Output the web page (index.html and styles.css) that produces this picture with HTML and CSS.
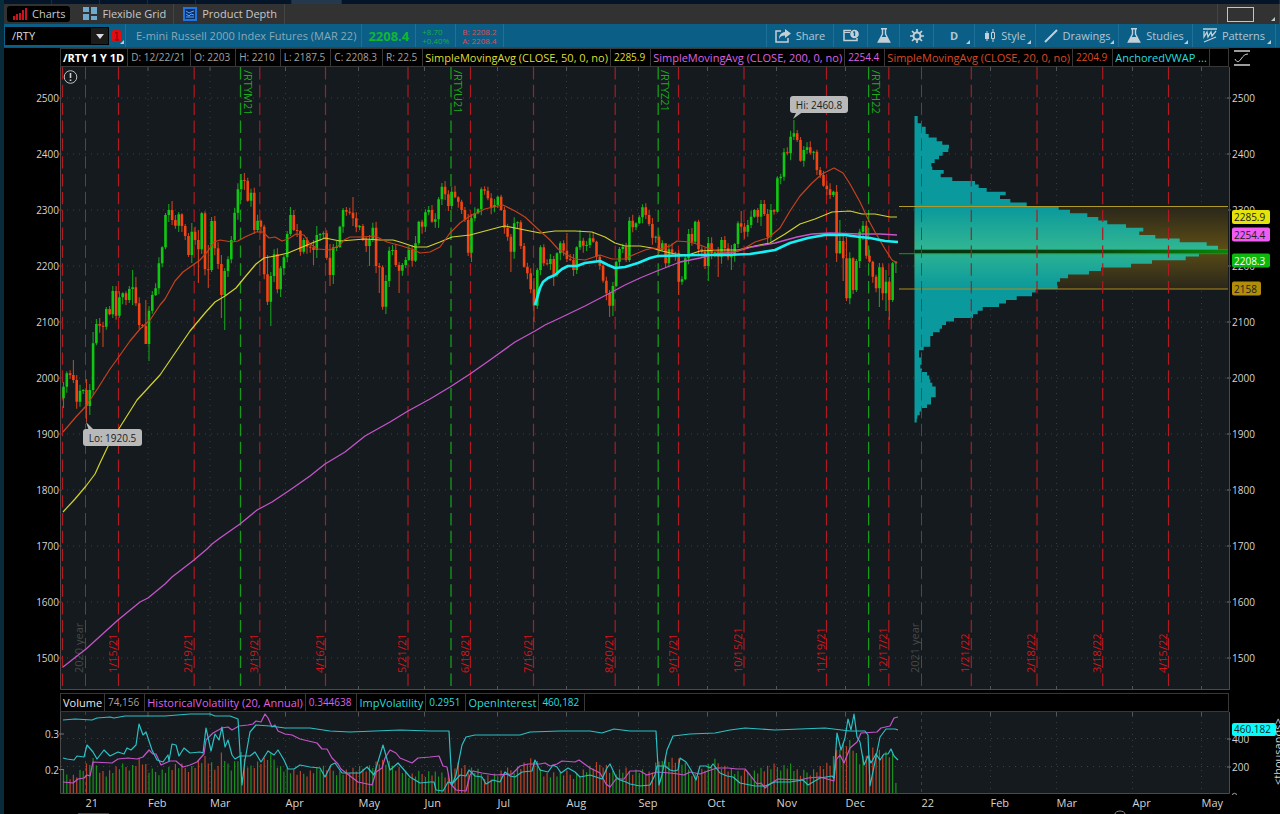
FILE: index.html
```html
<!DOCTYPE html>
<html lang="en">
<head>
<meta charset="utf-8">
<title>Charts - /RTY</title>
<link rel="stylesheet" href="styles.css">
</head>
<body>
<div class="app">
  <div class="window-strip"><i class="seg s1"></i><i class="seg s2"></i><i class="seg s3"></i><i class="seg s4"></i><i class="seg s5"></i><i class="seg active"></i><i class="seg"></i></div>

  <nav class="tabs">
    <button class="tab selected"><svg width="14" height="12" viewBox="0 0 14 12"><path d="M1 8v4M4 6v6M7 5v7M10 2v10M13 0v12" stroke="#c8141c" stroke-width="2"/></svg>Charts</button>
    <button class="tab"><svg width="14" height="14" viewBox="0 0 14 14" fill="#6fa9cc"><path d="M0 0h6v5H0zM8 0h6v7H8zM0 7h6v6H0zM8 9h6v4H8z"/></svg>Flexible Grid</button>
    <button class="tab"><svg width="14" height="14" viewBox="0 0 14 14"><rect x="1" y="1" width="12" height="12" fill="#0c2f66" stroke="#1f74dd" stroke-width="2"/><path d="M3 4l3 2 2-1 3-1M3 7l3 2 2-2 3 1M3 10h8" stroke="#58a6ff" fill="none"/></svg>Product Depth</button>
    <span class="grow"></span>
    <button class="tab layout" aria-label="Layout"><svg width="27" height="15" viewBox="0 0 27 15"><rect x=".5" y=".5" width="26" height="14" fill="none" stroke="#c4c4c4"/></svg></button>
  </nav>

  <div class="toolbar">
    <div class="symbol">
      <input type="text" value="/RTY" aria-label="Symbol">
      <button aria-label="Symbol list"><svg width="8" height="5" viewBox="0 0 8 5"><path d="M0 0h8L4 5z" fill="#ddd"/></svg></button>
    </div>
    <button class="link corner" aria-label="Link"><svg width="10" height="12" viewBox="0 0 10 12"><rect width="9" height="12" rx="2" fill="#e00d12"/><path d="M3 3l2-1v8M3 10h4" stroke="#800" fill="none"/></svg></button>
    <span class="cell title">E-mini Russell 2000 Index Futures (MAR 22)</span>
    <strong class="cell last">2208.4</strong>
    <span class="cell pair up"><span>+8.70</span><span>+0.40%</span></span>
    <span class="cell pair down"><span>B: 2208.2</span><span>A: 2208.4</span></span>
    <span class="grow"></span>
    <button class="tool share"><svg width="16" height="14" viewBox="0 0 16 14"><path d="M6 2H1v11h12V9" fill="none" stroke="#c3d0d8" stroke-width="1.5"/><path d="M10 0l6 4.500-6 4.500V6.500C7 6.500 5 7.500 4 10c0-4 2-6.500 6-7z" fill="#c3d0d8"/></svg>Share</button>
    <button class="tool w34" aria-label="Calendar"><svg width="16" height="13" viewBox="0 0 16 13"><path d="M8 1.500H1v10h13V9" fill="none" stroke="#c3d0d8" stroke-width="1.500"/><path d="M1 3.500h6" stroke="#c3d0d8"/><circle cx="11.500" cy="5" r="4.300" fill="#c3d0d8"/><path d="M11.500 2.500V7M10.300 3.500l1.200-1" stroke="#0b5e86" stroke-width="1.400" fill="none"/></svg></button>
    <button class="tool w32" aria-label="Lab"><svg width="14" height="15" viewBox="0 0 14 15"><path d="M4 .7h6M5.500 1v5L1.300 14h11.400L8.500 6V1" fill="none" stroke="#c3d0d8" stroke-width="1.400"/><path d="M4 9h6l2.500 5h-11z" fill="#c3d0d8"/></svg></button>
    <button class="tool w34" aria-label="Settings"><svg width="14" height="14" viewBox="0 0 14 14"><circle cx="7" cy="7" r="3.500" fill="none" stroke="#c3d0d8" stroke-width="2"/><path d="M7 0v3M7 11v3M0 7h3M11 7h3M2 2l2.200 2.200M9.800 9.800L12 12M12 2L9.800 4.200M4.200 9.800L2 12" stroke="#c3d0d8" stroke-width="1.700"/></svg></button>
    <button class="tool corner w41"><b>D</b></button>
    <button class="tool corner style"><svg width="12" height="13" viewBox="0 0 12 13"><path d="M3 2v10M9 0v3M9 10v3" stroke="#c3d0d8"/><path d="M1 4h4v6H1z" fill="#c3d0d8"/><path d="M7.500 3.500h3v6h-3z" fill="none" stroke="#c3d0d8"/></svg>Style</button>
    <button class="tool corner w83"><svg width="14" height="14" viewBox="0 0 14 14"><path d="M1 13L13 1" stroke="#c3d0d8" stroke-width="2"/></svg>Drawings</button>
    <button class="tool corner w74"><svg width="14" height="15" viewBox="0 0 14 15"><path d="M4 .7h6M5.500 1v5L1.300 14h11.400L8.500 6V1" fill="none" stroke="#c3d0d8" stroke-width="1.400"/><path d="M4 9h6l2.500 5h-11z" fill="#c3d0d8"/></svg>Studies</button>
    <button class="tool corner w83"><svg width="14" height="15" viewBox="0 0 14 15"><path d="M0 1h14" stroke="#c3d0d8" stroke-width="1.500"/><path d="M1 3v6l3-5 1 5 3-5 1 4 4-5M1 14l12-5" fill="none" stroke="#c3d0d8" stroke-width="1.300"/></svg>Patterns</button>
    <span class="end"></span>
  </div>

  <main class="charts">
    <div class="studies">
      <b>/RTY 1 Y 1D</b><span>D: 12/22/21</span><span>O: 2203</span><span>H: 2210</span><span>L: 2187.5</span><span>C: 2208.3</span><span>R: 22.5</span><span class="name yellow">SimpleMovingAvg (CLOSE, 50, 0, no)</span><span class="yellow">2285.9</span><span class="name pink">SimpleMovingAvg (CLOSE, 200, 0, no)</span><span class="pink">2254.4</span><span class="name orange">SimpleMovingAvg (CLOSE, 20, 0, no)</span><span class="orange">2204.9</span><span class="name cyan">AnchoredVWAP ...</span>
    </div>
    <button class="scale" aria-label="Axis settings"><svg width="16" height="16" viewBox="0 0 16 16"><path d="M0 1h16M0 15h16" stroke="#d0d0d0" stroke-width="1.500"/><path d="M1 9c2 4 4 3 6 0s4-5 7-5" fill="none" stroke="#d0d0d0"/></svg></button>

    <svg class="plot" id="price" viewBox="61 67 1168 623" role="img" aria-label="Price chart">
      <defs>
        <linearGradient id="barFill" gradientUnits="userSpaceOnUse" x1="0" y1="207" x2="0" y2="289">
          <stop offset="0" stop-color="#0a999c"/><stop offset=".5" stop-color="#30b592"/><stop offset="1" stop-color="#0a999c"/>
        </linearGradient>
        <linearGradient id="valueFill" x1="0" y1="0" x2="0" y2="1">
          <stop offset="0" stop-color="#2a271b"/><stop offset=".5" stop-color="#5c4c14"/><stop offset="1" stop-color="#2a271b"/>
        </linearGradient>
        <linearGradient id="pocFill" x1="0" y1="0" x2="1" y2="0">
          <stop offset="0" stop-color="#042f10"/><stop offset=".6" stop-color="#064a0c"/><stop offset="1" stop-color="#078507"/>
        </linearGradient>
      </defs>
    </svg>

    <div class="studies lower">
      <span class="name white">Volume</span><span>74,156</span><span class="name pink">HistoricalVolatility (20, Annual)</span><span class="pink">0.344638</span><span class="name cyan">ImpVolatility</span><span class="cyan">0.2951</span><span class="name cyan">OpenInterest</span><span class="cyan">460,182</span>
    </div>

    <svg class="plot" id="volume" viewBox="61 712 1168 102" role="img" aria-label="Volume and volatility"></svg>
  </main>
</div>
<script src="chart.js"></script>
</body>
</html>
```
FILE: styles.css
```css
* { box-sizing: border-box; }

body {
  margin: 0;
  background: #000;
  color: #c8c8c8;
  font: 11px/14px "Open Sans", "Noto Sans", sans-serif;
}

button, input {
  font: inherit;
  color: inherit;
  background: none;
  border: 0;
  margin: 0;
  padding: 0;
}

svg { flex: none; }

.app {
  border-left: 4px solid #082c3c;
  overflow: hidden;
}

.grow { flex: 1; }

.window-strip {
  display: flex;
  height: 4px;
  background: #04152a;
}
.seg { border-right: 1px solid #1b2c40; flex: 1; }
.s1, .s2, .s3, .s4 { flex: 0 0 48px; }
.s5 { flex: 0 0 96px; }
.seg.active { flex: 0 0 50px; background: #24384e; }

.tabs {
  display: flex;
  align-items: center;
  height: 20px;
  background: #323232;
}
.tab {
  display: flex;
  align-items: center;
  gap: 5px;
  height: 20px;
  padding: 0 7px 0 9px;
  border-right: 1px solid #444;
}
.tab.selected {
  height: 16px;
  margin: 0 4px 0 3px;
  padding: 0 5px 0 6px;
  border: 0;
  border-radius: 3px;
  background: #000;
}
.tab.layout {
  border-left: 1px solid #444;
  padding: 0 25px 0 9px;
  position: relative;
}

.toolbar {
  display: flex;
  align-items: stretch;
  height: 24px;
  background: #0b5e86;
  border-bottom: 1px solid #0a5276;
  color: #b2c6d2;
}
.symbol {
  display: flex;
  width: 104px;
  margin: 3px 3px 2px 1px;
  background: #000;
  color: #ddd;
}
.symbol input { flex: 1; min-width: 0; padding-left: 7px; }
.symbol button {
  display: flex;
  align-items: center;
  justify-content: center;
  width: 17px;
  margin: 1px;
  background: #1b1b1b;
}
.link { display: flex; align-items: center; width: 14px; border-right: 1px solid #1f7199; }
.cell {
  display: flex;
  align-items: center;
  white-space: nowrap;
  padding: 0 6px;
  border-right: 1px solid #1f7199;
}
.title { padding: 0 5px 0 10px; color: #8aa9b9; }
.last { color: #10b830; font-size: 13px; }
.pair {
  flex-direction: column;
  align-items: flex-start;
  justify-content: center;
  font-size: 8px;
  line-height: 9px;
}
.up { color: #13b047; }
.down { color: #dc5054; }
.tool {
  display: flex;
  align-items: center;
  justify-content: center;
  gap: 5px;
  border-left: 1px solid #1f7199;
}
.end { width: 5px; border-left: 1px solid #1f7199; }
.share { width: 67px; }
.w32 { width: 32px; }
.w34 { width: 34px; }
.w41 { width: 41px; }
.style { width: 61px; }
.w74 { width: 74px; }
.w83 { width: 83px; }
.corner, .layout { position: relative; }
.corner::after, .layout::after {
  content: "";
  position: absolute;
  right: 4px;
  bottom: 3px;
  border: 2px solid transparent;
  border-right-color: #b8cad4;
  border-bottom-color: #b8cad4;
}
.link::after { right: 1px; }

.charts {
  display: grid;
  grid-template-columns: minmax(0, 1fr) 51px;
  padding-left: 57px;
}
.studies {
  grid-column: 1;
  display: flex;
  height: 19px;
  margin-left: -1px;
  border: 1px solid #383838;
  white-space: nowrap;
  overflow: hidden;
  color: #a2a2a2;
  font-size: 10px;
  line-height: 17px;
}
.studies > * { padding: 0 5px 0 3px; border-right: 1px solid #383838; }
.studies b, .studies .name { padding: 0 2px; font-size: 11px; }
.studies b { padding-right: 3px; color: #fff; }
.lower { margin-top: 3px; }
.studies .yellow { color: #dede32; }
.studies .pink { color: #de62e2; }
.studies .orange { color: #da4a24; }
.studies .cyan { color: #26dede; }
.studies .white { color: #e8e8e8; }
.scale { display: flex; align-items: center; padding-left: 5px; }

.plot {
  grid-column: 1;
  display: block;
  width: 100%;
  height: auto;
  overflow: visible;
}
.plot text { font-family: "Open Sans", "Noto Sans", sans-serif; font-size: 11px; fill: #d4d4d4; }
.plot .axis { font-size: 10px; }
.plot .mid { text-anchor: middle; }
.plot .end-text { text-anchor: end; }
.plot .expiry { fill: #d4161c; }
.plot .year { fill: #484848; }
.plot .roll { fill: #1aac1a; }
.plot .dark { fill: #202020; }
.plot .light { fill: #fff; }
```
FILE: chart.js
```js
const NS = "http://www.w3.org/2000/svg";

function add(parent, tag, attrs, text) {
  const node = document.createElementNS(NS, tag);
  for (const key in attrs) node.setAttribute(key, attrs[key]);
  if (text !== undefined) node.textContent = text;
  parent.appendChild(node);
  return node;
}
const line = (p, x1, y1, x2, y2, stroke, extra) =>
  add(p, "path", { d: `M${x1} ${y1}L${x2} ${y2}`, stroke, fill: "none", ...extra });
const curve = (p, points, stroke, width) =>
  add(p, "polyline", { points, stroke, "stroke-width": width, fill: "none", "stroke-linejoin": "round" });

const price = document.getElementById("price");
const volume = document.getElementById("volume");

const months = [[148, "Feb"], [210, "Mar"], [285.5, "Apr"], [358.5, "May"], [424.5, "Jun"], [497.5, "Jul"], [566.5, "Aug"], [638.5, "Sep"], [707.5, "Oct"], [776.5, "Nov"], [845.5, "Dec"], [990.5, "Feb"], [1056.5, "Mar"], [1132.5, "Apr"], [1201.5, "May"]];
const years = [[85.5, "21", "2020 year"], [921.5, "22", "2021 year"]];
const expiries = [[62.5, ""], [118.5, "1/15/21"], [194.2, "2/19/21"], [259.8, "3/19/21"], [325.5, "4/16/21"], [408, "5/21/21"], [470.5, "6/18/21"], [533.5, "7/16/21"], [615.2, "8/20/21"], [678.5, "9/17/21"], [744, "10/15/21"], [826.5, "11/19/21"], [888.8, "12/17/21"], [971.3, "1/21/22"], [1037, "2/18/22"], [1102.7, "3/18/22"], [1168.5, "4/15/22"]];
const rolls = [[240.5, "/RTYM21"], [451, "/RTYU21"], [658.2, "/RTYZ21"], [868.6, "/RTYH22"]];

/* Closes, three units per pixel, measured down from each base. */
const closes = [
  [160, [680,640,645,660,725,692,690,738,690,550,492,497,500,447,463,393,467,412,400,420,387,382,430,495,497,552,452,405,385,310,262,165,150,180,197,163,198,228,285,215,240,268,160,328,330,183,265,312,405,333,298,240,158,88,60,62,122,98,210,182,200,343,425,348,283,388,325,292,222,165,210,213,275,240,260,262,270,225,222,220,293,345,262,261,200,150,155,158,175,202,198,240,258,240,203,318,322,440,363,272,270,315,332,315,300,270,302,250,185,200,157,150,185,178,118,80,103,138,95,112,125,150,180,278,175,160,148,88,92,115,142,135,110,150,203,230,275,190,187,258,320,340,388,437,330,262,310,312,297,345,280,250,272,297,300,330,262,242,257,255,235,245,290,317,362,400,437,378,305,267,260,300,182,202,190]],
  [90, [382,352,375,402,443,440,480,460,520,478,488,490,575,568,505,432,455,395,478,485,528,460,490,487,500,450,475,502,497,462,400,410,425,405,380,360,380,342,372,440,360,365,265,260,187,190,140,130,150,212,180,172,188,185,240,255,287,298,315,305,490,453,505,625,505,600,513,425,407,497,515,560,595,532,610,575,630,520,515]]
];
/* Wick extremes that stand out: index -> [high, low] in chart pixels. */
const wicks = {
  0: [382, 408], 3: [360, 383], 7: [379, 422], 8: [384, 415], 9: [332, 395], 12: [322, 347], 15: [286, 318], 21: [270, 305], 22: [277, 306], 25: [300, 344], 26: [306, 361], 32: [204, 222], 33: [201, 225], 35: [212, 232], 39: [223, 263], 41: [230, 283], 42: [212, 254], 44: [245, 288], 48: [255, 318], 49: [268, 330], 54: [174, 200], 55: [173, 190], 62: [255, 305], 63: [272, 326], 66: [266, 297], 69: [207, 236], 76: [240, 265], 77: [226, 258], 81: [244, 286], 82: [244, 284], 88: [197, 226], 93: [235, 266], 96: [263, 293], 98: [275, 314], 102: [262, 293], 107: [236, 262], 114: [197, 228], 115: [183, 205], 116: [181, 200], 123: [214, 256], 124: [214, 262], 136: [234, 272], 143: [278, 322], 144: [268, 309], 149: [256, 286], 153: [233, 262], 157: [230, 250], 166: [290, 317], 167: [282, 316], 172: [217, 262], 183: [248, 268], 187: [250, 295], 196: [237, 281], 199: [247, 277], 203: [245, 270], 206: [211, 233], 212: [200, 226], 222: [120, 140], 223: [130, 142], 235: [185, 262], 236: [220, 254], 237: [233, 281], 238: [237, 301], 243: [221, 240], 248: [263, 307], 250: [270, 311], 251: [277, 320], 252: [262, 302], 253: [261, 273]
};
const upward = [];
const step = 3.29;

/* Grid, session markers */
for (let i = 0; i < 11; i++) {
  const y = 98 + 56 * i;
  line(price, 61, y, 1229, y, "#3b4145", { "stroke-dasharray": "1 5" });
  add(price, "text", { x: 59, y: y + 4, class: "axis end-text" }, 2500 - 100 * i);
  add(price, "text", { x: 1232, y: y + 4, class: "axis" }, 2500 - 100 * i);
  line(price, 59, y, 61, y, "#777");
  line(price, 1227, y, 1231, y, "#777");
}
price.insertAdjacentHTML("afterbegin", '<rect x="61" y="67" width="1168" height="623" fill="#151a1e"/>');
for (const [x] of months) {
  line(price, x, 69, x, 687, "#363c40", { "stroke-dasharray": "1 5" });
  line(price, x, 67, x, 71, "#555");
  line(price, x, 686, x, 690, "#555");
}

/* Volume profile: right edge of each row, three units per pixel. */
const profile = [83,83,96,107,107,116,140,157,177,175,158,147,134,124,127,161,152,187,255,266,290,347,330,361,410,506,540,592,625,652,708,760,748,796,869,950,984,1014,927,887,786,723,633,597,534,510,501,503,437,426,380,348,327,278,263,249,192,168,156,149,129,121,121,121,101,87,87,95,95,91,96,111,118,121,127,137,137,137,123,123,111,96,89,82,80];
add(price, "rect", { x: 914.5, y: 207, width: 313.5, height: 82, fill: "url(#valueFill)" });
let outline = "M914.500 116";
profile.forEach((edge, i) => {
  outline += `V${(116 + i * 3.605).toFixed(1)}H${(890 + edge / 3).toFixed(1)}V${(116 + (i + 1) * 3.605).toFixed(1)}`;
});
add(price, "path", { d: outline + "H914.500Z", fill: "url(#barFill)" });
add(price, "rect", { x: 914.5, y: 249.7, width: 313.5, height: 3.6, fill: "url(#pocFill)" });
line(price, 899, 206.5, 1228, 206.5, "#b09a2a");
line(price, 899, 289, 1228, 289, "#b08c18");
line(price, 899, 253.7, 1228, 253.7, "#139a1a");

const dash = { "stroke-dasharray": "12.4 5.44" };
for (const [x, , label] of years) {
  line(price, x, 67, x, 686, "#464b4e", dash);
  add(price, "text", { transform: `translate(${x - 3} 673) rotate(-90)`, class: "year" }, label);
}
for (const [x, label] of expiries) {
  line(price, x, 67, x, 686, "#b01a20", { ...dash, "stroke-width": 1.2 });
  add(price, "text", { transform: `translate(${x - 2} 673) rotate(-90)`, class: "expiry" }, label);
}
for (const [x, label] of rolls) {
  line(price, x, 67, x, 686, "#179a1c", { ...dash, "stroke-width": 1.3 });
  add(price, "text", { transform: `translate(${x + 3} 70) rotate(90)`, class: "roll" }, label);
}

/* Candles */
let index = 0, open = 398.3;
const paths = { up: ["", ""], down: ["", ""] };
for (const [base, list] of closes) {
  for (const value of list) {
    const close = base + value / 3;
    const x = (63.5 + index * step).toFixed(1);
    const up = close <= open;
    const top = Math.min(open, close), bottom = Math.max(open, close, top + 1);
    const high = wicks[index] ? wicks[index][0] : top - 1 - (index * 7) % 6;
    const low = wicks[index] ? wicks[index][1] : bottom + 1 + (index * 5) % 7;
    const set = up ? paths.up : paths.down;
    set[0] += `M${x} ${high}V${low}`;
    set[1] += `M${x} ${top.toFixed(1)}V${bottom.toFixed(1)}`;
    upward.push(up);
    open = close;
    index++;
  }
}
for (const [key, wick, body] of [["down", "#c9401c", "#f54312"], ["up", "#15a01b", "#10c812"]]) {
  add(price, "path", { d: paths[key][0], stroke: wick, "stroke-width": 1.1 });
  add(price, "path", { d: paths[key][1], stroke: body, "stroke-width": 2.6 });
}

/* Moving averages and anchored VWAP */
curve(price, "63,512 75,499 86,486 95,474 100,463 110,442 120,427 137,400 148,388 160,375 175,353 190,331 205,313 215,302 225,296 236,288 245,277 256,264 264,258 275,256 288,253 300,248 312,243 325,238 340,241 365,239 380,240 393,240 400,242 415,247 427,247 440,242 452,237 470,235 485,231 500,227 505,226 520,229 540,233 555,231 575,231 592,232 605,237 615,243 625,246 640,246 652,248 662,251 675,254 688,255 700,251 720,250 738,250 750,247 770,243 785,234 800,224 815,219 832,212 850,211 862,214 875,214 890,217 897,217", "#d2d22e", 1.2);
curve(price, "63,667 86,649 118,620 140,602 148,598 165,584 172,577 194,560 207,549 212,544 220,538 240,524 257,510 272,502 290,490 310,476 325,464 345,452 365,436 390,422 408,411 430,399 450,387 470,374 490,360 515,342 535,331 545,325 560,318 585,306 610,293 625,285 640,278 657,271 680,262 700,258 715,254 735,252 752,247 775,243 797,237 812,234 830,233 860,234 880,234 897,235", "#c455c9", 1.3);
curve(price, "63,432 75,418 86,406 90,400 98,388 110,369 118,358 130,341 140,329 150,320 160,305 165,299 175,281 183,272 200,260 208,251 214,242 220,240 232,242 238,241 245,237 256,232 263,232 269,238 275,237 282,241 288,239 296,234 304,235 310,244 318,249 330,250 340,245 344,240 350,237 362,237 375,236 387,242 402,246 414,250 420,253 430,252 440,247 450,233 460,223 470,216 485,209 493,207 503,205 515,211 525,217 540,231 550,240 558,249 567,255 575,259 585,260 600,255 612,259 625,259 633,255 645,250 653,248 660,249 670,246 677,241 690,242 700,245 710,249 720,252 735,252 745,248 755,242 768,238 780,228 790,211 800,196 812,183 822,174 834,168 843,173 850,184 860,202 868,219 875,232 885,249 892,260 897,263", "#c6421e", 1.2);
curve(price, "535,305 540,288 543,282 548,278 555,275 562,269 568,266 577,266 585,263 600,261 608,265 615,268 625,267 638,263 650,258 658,256 700,255 725,255 750,254 775,250 790,243 808,238 825,235 845,235 860,237 870,238 885,241 898,242", "#19f0f6", 2.7);

/* Callouts */
add(price, "path", { d: "M793 119L797 111H804Z", fill: "#b9b9b9" });
add(price, "rect", { x: 790, y: 96, width: 58, height: 17, rx: 3, fill: "#b9b9b9" });
add(price, "text", { x: 819, y: 109, class: "dark axis mid" }, "Hi: 2460.8");
add(price, "path", { d: "M86 422L89 431H95Z", fill: "#b9b9b9" });
add(price, "rect", { x: 83, y: 429, width: 59, height: 17, rx: 3, fill: "#b9b9b9" });
add(price, "text", { x: 112.5, y: 442, class: "dark axis mid" }, "Lo: 1920.5");

/* Price tags */
for (const [y, w, fill, label, tone] of [[217, 38, "#e4e40a", "2285.9", "dark"], [234.5, 38, "#f05cf2", "2254.4", "dark"], [260.5, 38, "#0cb80c", "2208.3", "light"], [288.5, 29, "#b28e08", "2158", "dark"]]) {
  add(price, "rect", { x: 1232, y: y - 7, width: w, height: 14, rx: 2, fill });
  add(price, "text", { x: 1234, y: y + 4, class: `axis ${tone}` }, label);
}

/* Notice badge */
add(price, "circle", { cx: 70.5, cy: 77, r: 6.3, fill: "#151a1e", stroke: "#c0c0c0" });
line(price, 70.5, 73, 70.5, 78, "#d0d0d0", { "stroke-width": 1.6 });
line(price, 70.5, 79.5, 70.5, 81, "#d0d0d0", { "stroke-width": 1.6 });
add(price, "path", { d: "M60.500 67V689.500H1229.500V67", fill: "none", stroke: "#4a4a4a" });

/* Lower pane */
add(volume, "rect", { x: 61, y: 712, width: 1168, height: 82, fill: "#151a1e" });
for (const y of [738.5, 766.5]) line(volume, 61, y, 1229, y, "#3b4145", { "stroke-dasharray": "1 5" });
for (const [x, label] of months) {
  line(volume, x, 716, x, 793, "#363c40", { "stroke-dasharray": "1 5" });
  line(volume, x, 712, x, 716, "#555");
  add(volume, "text", { x, y: 807, class: "month" }, label);
}
for (const [x, label] of years) {
  line(volume, x, 712, x, 793, "#3b4145", { "stroke-dasharray": "3 4" });
  add(volume, "text", { x, y: 807, class: "month" }, label);
}
const tops = [[63,774],[75,776],[87,766],[93,762],[105,774],[120,768],[133,766],[140,759],[150,773],[165,770],[175,767],[190,768],[205,759],[215,770],[222,752],[230,770],[242,755],[250,767],[272,757],[280,767],[300,775],[320,768],[340,772],[360,770],[380,762],[400,768],[410,777],[430,772],[450,778],[456,762],[470,770],[490,777],[515,769],[533,760],[545,774],[575,775],[604,763],[612,773],[640,770],[650,775],[662,757],[680,762],[695,775],[716,762],[740,775],[760,770],[790,765],[800,775],[832,764],[838,746],[850,742],[860,764],[872,748],[880,752],[893,758],[896,784]];
const bars = { up: "", down: "" };
let k = 0;
upward.forEach((up, i) => {
  const x = 63.5 + i * step;
  while (k < tops.length - 2 && tops[k + 1][0] < x) k++;
  const [x0, y0] = tops[k], [x1, y1] = tops[k + 1];
  const y = y0 + (y1 - y0) * (x - x0) / (x1 - x0) + (i * 13) % 9 - 4;
  bars[up ? "up" : "down"] += `M${x.toFixed(1)} 793V${y.toFixed(1)}`;
});
add(volume, "path", { d: bars.up, stroke: "#1b901d", "stroke-width": 1.2 });
add(volume, "path", { d: bars.down, stroke: "#b84426", "stroke-width": 1.2 });
curve(volume, "63,782 73,783 78,779 84,778 87,775 90,776 93,762 112,763 118,759 128,758 137,759 143,757 149,750 153,754 156,754 161,765 170,761 176,761 183,767 190,765 197,762 204,754 206,740 213,733 222,728 228,727 232,730 239,726 248,725 253,724 256,721 261,722 265,714 268,718 272,727 275,725 278,731 285,734 292,735 300,739 317,743 322,749 327,749 332,758 338,764 341,769 350,776 358,782 372,785 376,772 382,768 385,758 390,750 396,753 400,758 412,763 418,758 430,757 439,756 443,766 447,767 450,783 456,790 466,791 470,775 473,771 482,773 495,775 512,774 520,766 528,764 540,764 545,763 550,766 557,764 562,761 575,762 579,760 590,768 600,773 606,784 610,787 616,779 624,779 630,771 640,771 647,775 657,772 670,773 678,774 684,775 690,772 700,774 708,771 717,768 728,768 737,769 745,769 750,775 757,784 761,783 765,788 770,784 778,779 800,780 808,778 820,777 834,781 836,760 840,755 844,763 850,748 857,742 861,733 877,732 881,728 890,726 894,718 898,717", "#c455c9", 1.2);
curve(volume, "63,720 75,719 92,720 97,718 110,717 114,718 125,716 165,716 190,714 210,714 215,716 230,716 238,719 242,785 245,760 250,732 256,725 270,726 285,728 310,728 330,731 350,732 375,731 400,730 430,731 449,731 452,785 456,775 462,745 466,737 475,735 500,735 520,735 530,732 560,731 590,731 602,733 614,729 630,731 656,731 659,785 662,775 667,750 673,736 690,734 715,733 730,730 745,728 775,730 800,729 825,728 850,731 865,731 868,735 870,786 876,757 880,737 886,729 895,729 898,730", "#2bc0c4", 1.2);
curve(volume, "63,758 67,759 74,760 77,756 84,757 87,745 93,752 97,759 104,750 110,756 118,752 124,754 127,748 131,750 136,745 139,724 143,735 146,732 152,750 157,760 163,762 168,755 169,761 172,744 176,745 179,756 184,748 190,753 200,752 203,753 206,728 211,751 215,734 219,740 222,727 225,747 228,740 232,755 235,759 240,756 250,756 255,752 261,762 268,751 274,755 278,750 284,760 288,769 294,769 300,765 310,767 320,768 325,777 331,765 335,763 342,773 360,773 367,767 374,775 383,745 390,770 398,763 405,771 410,777 420,783 430,782 434,782 436,790 443,791 448,782 453,783 460,775 466,776 469,770 475,776 482,777 486,784 493,780 500,782 505,772 510,776 515,777 522,772 532,771 535,760 540,770 548,772 553,765 557,767 561,773 568,768 575,772 580,777 590,775 602,779 607,768 610,764 616,777 620,780 626,782 630,784 640,786 650,785 655,775 657,766 665,766 670,770 674,771 678,770 680,758 686,762 691,770 696,780 700,766 706,766 710,768 713,764 720,773 727,776 733,777 740,783 755,786 765,786 775,782 790,782 803,780 808,785 820,778 832,776 834,778 837,733 841,750 845,738 848,719 851,730 854,714 857,737 860,742 864,765 868,756 871,763 876,754 880,760 884,754 888,754 891,749 894,756 898,760", "#2bc0c4", 1.2);
add(volume, "path", { d: "M60.500 712V793.500H1229.500V712", fill: "none", stroke: "#4a4a4a" });
for (const [y, label] of [[734, "0.3"], [769.5, "0.2"]]) {
  add(volume, "text", { x: 59, y: y + 4, class: "axis end-text" }, label);
  line(volume, 59, y, 64, y, "#777");
}
for (const [y, label] of [[739, "400"], [767, "200"]]) {
  add(volume, "text", { x: 1232, y: y + 4, class: "axis" }, label);
  line(volume, 1227, y, 1231, y, "#777");
}
add(volume, "path", { d: "M1232 794.500q2.500-2.500 5 0", fill: "none", stroke: "#aaa" });
add(volume, "rect", { x: 1232, y: 723, width: 44, height: 13, rx: 2, fill: "#0ff" });
add(volume, "text", { x: 1234, y: 733, class: "axis dark" }, "460.182");
add(volume, "text", { transform: "translate(1282 785) rotate(-90)" }, "<thousands>");
add(volume, "rect", { x: 78, y: 813, width: 31, height: 1, fill: "#444" });
add(volume, "path", { d: "M1115 814a5 3 0 0 1 10 0", fill: "none", stroke: "#888" });
```
